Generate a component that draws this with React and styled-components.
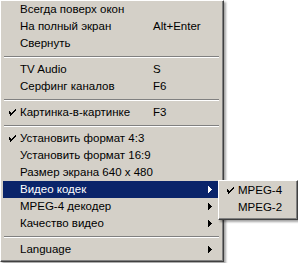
import React from 'react';
import styled, { createGlobalStyle } from 'styled-components';

//======= STYLES =======//

const Global = createGlobalStyle`
  html, body {
    margin: 0;
    padding: 0;
    background: #ffffff;
  }
`
const Screen = styled.div`
  position: relative;
  width: 298px;
  height: 263px;
  overflow: hidden;
  background: #ffffff;
  font-family: "Liberation Sans", Arial, sans-serif;
  font-size: 11.5px;
  color: #000000;
`
const Menu = styled.div`
  display: flex;
  flex-direction: column;
  box-sizing: border-box;
  width: ${(props) => props.width}px;
  background: #d4d0c8;
  border-top: 1px solid #ffffff;
  border-left: 1px solid #ffffff;
  border-right: 1px solid #404040;
  border-bottom: 1px solid #404040;
  box-shadow: inset -1px -1px 0 #808080, 2px 2px 2px rgba(0, 0, 0, 0.35);
  padding: ${(props) => props.pad};
`
const SubMenu = styled(Menu)`
  position: absolute;
  left: 218px;
  top: 180px;
`
const Item = styled.div`
  display: grid;
  grid-template-columns: 17px ${(props) => props.labelWidth}px 1fr 12px;
  align-items: center;
  height: 17px;
  background: ${(props) => (props.active ? '#0a246a' : 'transparent')};
  color: ${(props) => (props.active ? '#ffffff' : '#000000')};
  white-space: nowrap;
`
const Check = styled.span`
  display: flex;
  justify-content: center;
  padding-left: 1px;
`
const Label = styled.span`
  line-height: 17px;
`
const Shortcut = styled.span`
  line-height: 17px;
`
const Arrow = styled.span`
  display: flex;
  align-items: center;
`
const Separator = styled.div`
  height: 9px;
  display: flex;
  flex-direction: column;
  justify-content: center;
  padding: 0 1px;

  &::before {
    content: '';
    display: block;
    height: 1px;
    background: #808080;
    border-bottom: 1px solid #ffffff;
  }
`

//======= ICONS =======//

const CheckMark = ({ color }) => (
  <svg width="7" height="7" viewBox="0 0 7 7" shapeRendering="crispEdges">
    <path
      fill={color}
      d="M6 0h1v1h-1zM5 1h2v1h-2zM0 2h1v1h-1zM4 2h2v1h-2zM0 3h2v1h-2zM3 3h2v1h-2zM0 4h4v1h-4zM1 5h2v1h-2zM1 6h1v1h-1z"
    />
  </svg>
)

const Triangle = ({ color }) => (
  <svg width="4" height="7" viewBox="0 0 4 7" shapeRendering="crispEdges">
    <path fill={color} d="M0 0h1v7h-1zM1 1h1v5h-1zM2 2h1v3h-1zM3 3h1v1h-1z" />
  </svg>
)

//======= DATA =======//

const items = [
  { label: 'Всегда поверх окон' },
  { label: 'На полный экран', key: 'Alt+Enter' },
  { label: 'Свернуть' },
  { sep: true },
  { label: 'TV Audio', key: 'S' },
  { label: 'Серфинг каналов', key: 'F6' },
  { sep: true },
  { label: 'Картинка-в-картинке', key: 'F3', checked: true },
  { sep: true },
  { label: 'Установить формат 4:3', checked: true },
  { label: 'Установить формат 16:9' },
  { label: 'Размер экрана 640 x 480' },
  { label: 'Видео кодек', sub: true, active: true },
  { label: 'MPEG-4 декодер', sub: true },
  { label: 'Качество видео', sub: true },
  { sep: true },
  { label: 'Language', sub: true },
]

const codecs = [
  { label: 'MPEG-4', checked: true },
  { label: 'MPEG-2' },
]

//======= COMPONENT =======//

const MenuRow = ({ item, labelWidth }) => {
  const color = item.active ? '#ffffff' : '#000000'
  return (
    <Item active={item.active} labelWidth={labelWidth}>
      <Check>{item.checked && <CheckMark color={color} />}</Check>
      <Label>{item.label}</Label>
      <Shortcut>{item.key}</Shortcut>
      <Arrow>{item.sub && <Triangle color={color} />}</Arrow>
    </Item>
  )
}

export default function App() {
  return (
    <Screen>
      <Global />
      <Menu width={224} pad="0 3px 3px 2px">
        {items.map((item, idx) =>
          item.sep ? (
            <Separator key={idx} />
          ) : (
            <MenuRow key={idx} item={item} labelWidth={133} />
          )
        )}
      </Menu>
      <SubMenu width={80} pad="1px 3px 3px 2px">
        {codecs.map((item, idx) => (
          <MenuRow key={idx} item={item} labelWidth={50} />
        ))}
      </SubMenu>
    </Screen>
  )
}
